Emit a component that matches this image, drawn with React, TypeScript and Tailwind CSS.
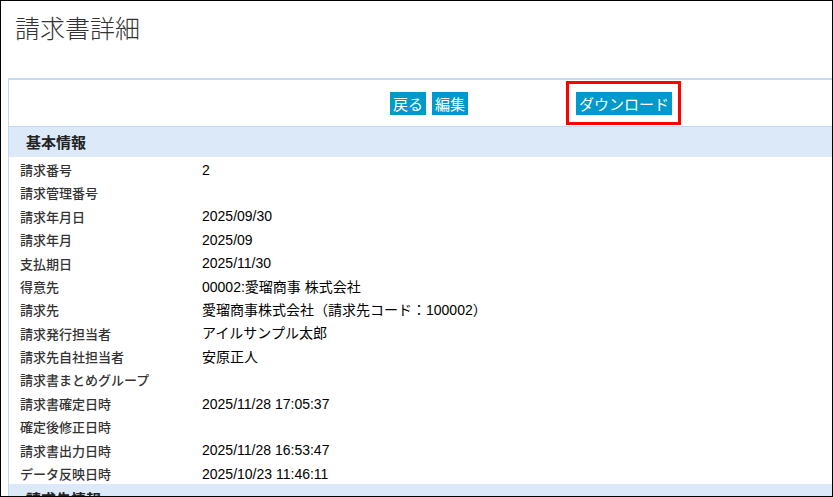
import React from "react";

const rows: [string, string][] = [
  ["請求番号", "2"],
  ["請求管理番号", ""],
  ["請求年月日", "2025/09/30"],
  ["請求年月", "2025/09"],
  ["支払期日", "2025/11/30"],
  ["得意先", "00002:愛瑠商事 株式会社"],
  ["請求先", "愛瑠商事株式会社（請求先コード：100002）"],
  ["請求発行担当者", "アイルサンプル太郎"],
  ["請求先自社担当者", "安原正人"],
  ["請求書まとめグループ", ""],
  ["請求書確定日時", "2025/11/28 17:05:37"],
  ["確定後修正日時", ""],
  ["請求書出力日時", "2025/11/28 16:53:47"],
  ["データ反映日時", "2025/10/23 11:46:11"],
];

const jp = "font-['Noto_Sans_CJK_JP',sans-serif]";
const val = "font-['Liberation_Sans','Noto_Sans_CJK_JP',sans-serif]";

export default function App() {
  return (
    <div className="w-[833px] h-[497px] border border-black overflow-hidden bg-white">
      <div className={`h-[77px] pl-[14px] pt-[9px] text-[25px] leading-[34px] text-[#333] font-light ${jp}`}>
        請求書詳細
      </div>
      <div className="ml-[7px] w-[900px] border-l border-t-2 border-[#c0daf2]">
        <div className="h-[47px] border-b border-[#c0daf2] flex items-center pl-[381px]">
          <button className={`h-[23px] px-[3px] bg-[#0099cc] text-white text-[15px] leading-[23px] ${jp}`}>戻る</button>
          <button className={`ml-[6px] h-[23px] px-[3px] bg-[#0099cc] text-white text-[15px] leading-[23px] ${jp}`}>編集</button>
          <div className="ml-[98px] border-[3px] border-[#ff0000] pl-[7px] pr-[6px] pt-[8px] pb-[6px]">
            <button className={`h-[23px] px-[3px] bg-[#0099cc] text-white text-[15px] leading-[23px] ${jp}`}>ダウンロード</button>
          </div>
        </div>
        <div className={`h-[30px] bg-[#dbe9f8] pl-[17px] flex items-center text-[15px] font-bold text-[#222] ${jp}`}>
          基本情報
        </div>
        {rows.map(([k, v]) => (
          <div key={k} className="h-[23.4px] flex items-center pl-[11px]">
            <div className={`w-[182px] pt-[2px] text-[13px] font-medium text-[#333] ${jp}`}>{k}</div>
            <div className={`pt-[2px] text-[14px] leading-[20px] text-black ${val}`}>{v}</div>
          </div>
        ))}
        <div className={`h-[30px] bg-[#dbe9f8] pl-[17px] flex items-center text-[15px] font-bold text-[#222] ${jp}`}>
          請求先情報
        </div>
      </div>
    </div>
  );
}
